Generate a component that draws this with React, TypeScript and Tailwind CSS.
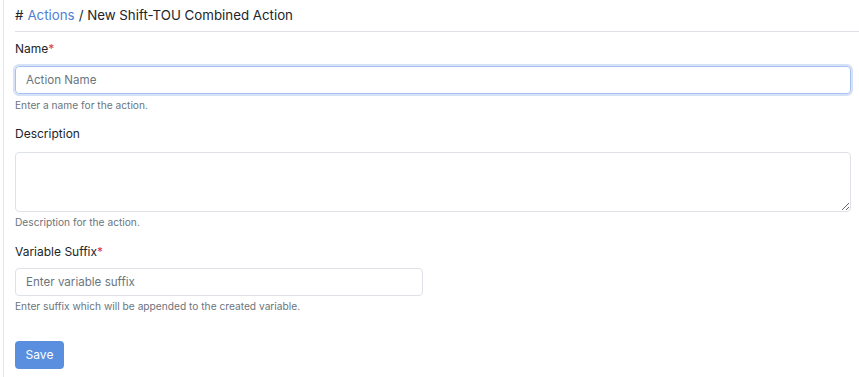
export default function App() {
  return (
    <div className="h-[377px] bg-white pl-[3px] font-['Inter',sans-serif] text-[#212529]">
      <div className="h-full border-l border-[#e5e7eb] pl-[11px]">
        <div className="flex h-[32px] items-center border-b border-[#dee2e6] pt-[1px] text-[13.3px]">
          <span># </span>
          <a className="ml-1 text-[#4f7fd4]">Actions</a>
          <span className="ml-1">/ New Shift-TOU Combined Action</span>
        </div>

        <div className="mr-[8px] pt-[9px]">
          <label className="block h-[16px] text-[12px] leading-[16px]">
            Name<span className="text-[#dc3545]">*</span>
          </label>
          <input
            placeholder="Action Name"
            className="mt-[9px] block h-[28px] w-full rounded-[4px] border border-[#a9c1ee] px-[10px] text-[11.6px] shadow-[0_0_0_2px_#d6e2f8] outline-none placeholder:text-[#6c757d]"
          />
          <div className="mt-[4px] text-[10.2px] leading-[14px] text-[#6c757d]">Enter a name for the action.</div>

          <label className="mt-[14px] block h-[16px] text-[12px] leading-[16px]">Description</label>
          <textarea className="mt-[10px] block h-[60px] w-full rounded-[4px] border border-[#dee2e6] px-[10px] text-[12px] outline-none" />
          <div className="mt-[3px] text-[10.2px] leading-[14px] text-[#6c757d]">Description for the action.</div>

          <label className="mt-[15px] block h-[16px] text-[12px] leading-[16px]">
            Variable Suffix<span className="text-[#dc3545]">*</span>
          </label>
          <input
            placeholder="Enter variable suffix"
            className="mt-[8px] block h-[28px] w-[408px] rounded-[4px] border border-[#dee2e6] px-[10px] text-[11.6px] outline-none placeholder:text-[#6c757d]"
          />
          <div className="mt-[3px] text-[10.2px] leading-[14px] text-[#6c757d]">
            Enter suffix which will be appended to the created variable.
          </div>

          <button className="mt-[28px] h-[28px] w-[49px] rounded-[4px] bg-[#5a8fe0] text-[12px] text-white">Save</button>
        </div>
      </div>
    </div>
  );
}
